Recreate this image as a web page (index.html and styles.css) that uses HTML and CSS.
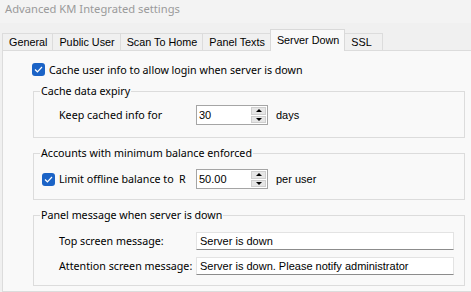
FILE: index.html
```html
<!DOCTYPE html>
<html lang="en">
<head>
  <meta charset="UTF-8">
  <title>Advanced KM Integrated settings</title>
  <link rel="stylesheet" href="styles.css">
</head>
<body>
  <div class="titlebar">Advanced KM Integrated settings</div>

  <!-- Tab strip -->
  <div class="tabs">
    <div class="tab">General</div>
    <div class="tab">Public User</div>
    <div class="tab">Scan To Home</div>
    <div class="tab">Panel Texts</div>
    <div class="tab active">Server Down</div>
    <div class="tab tab-last">SSL</div>
  </div>

  <div class="page">
    <label class="check-row">
      <span class="checkbox"><svg width="9" height="7" viewBox="0 0 9 7"><path d="M1 3.5 L3.4 5.8 L8 1" fill="none" stroke="#fff" stroke-width="1.2"/></svg></span>
      Cache user info to allow login when server is down
    </label>

    <fieldset class="group group-expiry">
      <legend>Cache data expiry</legend>
      <div class="row">
        <span class="label">Keep cached info for</span>
        <div class="spin">
          <span class="spin-value">30</span>
          <span class="spin-buttons">
            <span class="spin-btn"><span class="arrow up"></span></span>
            <span class="spin-btn"><span class="arrow down"></span></span>
          </span>
        </div>
        <span class="unit">days</span>
      </div>
    </fieldset>

    <fieldset class="group group-balance">
      <legend>Accounts with minimum balance enforced</legend>
      <div class="row">
        <span class="checkbox"><svg width="9" height="7" viewBox="0 0 9 7"><path d="M1 3.5 L3.4 5.8 L8 1" fill="none" stroke="#fff" stroke-width="1.2"/></svg></span>
        <span class="label-check">Limit offline balance to</span>
        <span class="currency">R</span>
        <div class="spin">
          <span class="spin-value">50.00</span>
          <span class="spin-buttons">
            <span class="spin-btn"><span class="arrow up"></span></span>
            <span class="spin-btn"><span class="arrow down"></span></span>
          </span>
        </div>
        <span class="unit">per user</span>
      </div>
    </fieldset>

    <fieldset class="group group-message">
      <legend>Panel message when server is down</legend>
      <div class="row">
        <span class="label">Top screen message:</span>
        <div class="textbox">Server is down</div>
      </div>
      <div class="row">
        <span class="label">Attention screen message:</span>
        <div class="textbox">Server is down. Please notify administrator</div>
      </div>
    </fieldset>
  </div>
</body>
</html>
```

FILE: styles.css
```css
body {
  margin: 0;
  padding: 0;
  width: 471px;
  height: 292px;
  overflow: hidden;
  background-color: #f0f0f0;
  font-family: "Noto Sans", sans-serif;
  font-size: 10.7px;
  color: #000;
  white-space: nowrap;
}

.titlebar {
  height: 23px;
  line-height: 18px;
  padding-left: 5px;
  font-size: 11.2px;
  color: #9a9a9a;
  background-color: #f3f3f3;
}

/* Tabs */
.tabs {
  display: flex;
  align-items: flex-end;
  height: 27px;
  padding-left: 2px;
}

.tab {
  height: 16px;
  line-height: 16px;
  padding: 0 5px 0 6px;
  font-family: "Liberation Sans", Arial, sans-serif;
  font-size: 10.8px;
  border: 1px solid #dcdcdc;
  border-bottom: none;
  margin-right: -1px;
  background-color: #f0f0f0;
}

.tab.active {
  line-height: 20px;
  background-color: #f9f9f9;
  border-color: #d9d9d9;
  position: relative;
  z-index: 1;
  margin-bottom: -1px;
  height: 21px;
}

.tab-last {
  width: 26px;
}

.page {
  margin-left: 2px;
  height: 242px;
  background-color: #f9f9f9;
  border: 1px solid #dcdcdc;
  border-right: none;
  padding: 12px 0 0 28px;
  box-sizing: border-box;
}

/* Checkboxes */
.check-row {
  display: flex;
  align-items: center;
  gap: 4px;
  height: 13px;
  margin-left: 1px;
}

.checkbox {
  display: inline-flex;
  align-items: center;
  justify-content: center;
  width: 13px;
  height: 13px;
  border-radius: 3px;
  background-color: #1b63c6;
  flex-shrink: 0;
}

/* Group boxes */
.group {
  width: 432px;
  box-sizing: border-box;
  margin: 7px 0 0 2px;
  padding: 0;
  border: 1px solid #dcdcdc;
}

.group legend {
  margin-left: 6px;
  padding: 0 1px;
  line-height: 16px;
}

.row {
  display: flex;
  align-items: center;
  padding-left: 25px;
}

.label {
  width: 137px;
}

.group-expiry {
  padding: 6px 0 12px;
}

.group-balance {
  margin-top: 7px;
  padding: 8px 0 10px;
}

.group-balance .row {
  padding-left: 8px;
}

.label-check {
  margin-left: 4px;
  width: 120px;
}

.currency {
  width: 17px;
}

.group-message {
  margin-top: 7px;
  padding: 9px 0 10px;
}

.group-message .row + .row {
  margin-top: 7px;
}

/* Numeric spinner */
.spin {
  display: flex;
  width: 72px;
  height: 20px;
  box-sizing: border-box;
  border: 1px solid #a5a5a5;
  background-color: #fff;
}

.spin-value {
  flex: 1;
  padding-left: 2px;
  line-height: 18px;
  font-family: "Liberation Sans", Arial, sans-serif;
  font-size: 11px;
}

.spin-buttons {
  display: flex;
  flex-direction: column;
  width: 15px;
  padding: 1px 1px 1px 0;
  gap: 1px;
}

.spin-btn {
  flex: 1;
  display: flex;
  align-items: center;
  justify-content: center;
  background-color: #e6e6e6;
  border: 1px solid #cfcfcf;
}

.arrow {
  width: 0;
  height: 0;
  border-left: 3px solid transparent;
  border-right: 3px solid transparent;
}

.arrow.up {
  border-bottom: 3px solid #000;
}

.arrow.down {
  border-top: 3px solid #000;
}

.unit {
  margin-left: 8px;
  font-family: "Liberation Sans", Arial, sans-serif;
  font-size: 11px;
}

/* Text boxes */
.textbox {
  width: 258px;
  height: 18px;
  box-sizing: border-box;
  padding-left: 3px;
  line-height: 16px;
  background-color: #fff;
  border: 1px solid #e3e3e3;
  border-bottom-color: #8c8c8c;
  font-family: "Liberation Sans", Arial, sans-serif;
  font-size: 11px;
}
```
